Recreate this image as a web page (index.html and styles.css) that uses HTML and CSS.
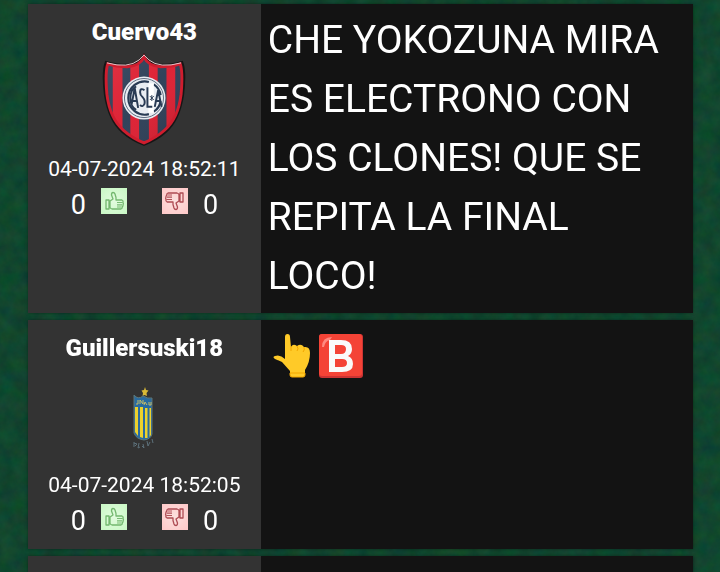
FILE: index.html
```html
<!DOCTYPE html>
<html lang="es">
<head>
<meta charset="utf-8">
<meta name="viewport" content="width=device-width, initial-scale=1">
<title>Chat</title>
<link rel="stylesheet" href="styles.css">
</head>
<body>
<svg class="felt" aria-hidden="true">
  <filter id="grain" x="0" y="0" width="100%" height="100%" color-interpolation-filters="sRGB">
    <feTurbulence type="fractalNoise" baseFrequency="0.07" numOctaves="4" seed="8"/>
    <feColorMatrix values="0.10 0 0 0 0.015  0 0.10 0 0 0.225  0 0 0.08 0 0.14  0 0 0 0 1"/>
  </filter>
  <rect width="100%" height="100%" filter="url(#grain)"/>
</svg>
<svg class="symbols" aria-hidden="true">
  <symbol id="thumb" viewBox="0 0 26 26">
    <path d="M5 12h3v9H5zM9 13l3-2-1.500-4q0-2.500 1.500-2.500 1.500 0 2 1.500l1 3.500V12h6q1.500.5 1 2.500.8 1.200 0 2.300.3 1.300-.7 2 .2 1.700-1.300 2.200H11q-1.500-.5-2-1.500z" fill="none" stroke="currentColor" stroke-width="1.300" stroke-linejoin="round" opacity=".85"/>
    <path d="M16 14.500h5.500M16 16.800h5M16 19h4.500" stroke="currentColor" stroke-width="1.200" opacity=".8"/>
  </symbol>
</svg>
<main class="feed">
  <article class="post">
    <header class="author">
      <h2 class="name">Cuervo43</h2>
      <div class="crest">
        <svg class="shield" viewBox="0 0 86 96" role="img" aria-label="Escudo CASLA">
          <defs>
            <clipPath id="body"><path d="M43 4Q39 13 26 14 14 14 6 11 3 19 5 42 8 67 22 79 31 87 43 92 55 87 64 79 78 67 81 42 83 19 80 11 72 14 60 14 47 13 43 4z"/></clipPath>
            <linearGradient id="shade" x2="1" y2="1"><stop offset="0" stop-color="#fff" stop-opacity=".1"/><stop offset=".5" stop-color="#fff" stop-opacity=".04"/><stop offset="1" stop-opacity=".15"/></linearGradient>
          </defs>
          <path d="M43 2Q39 11 26 12 14 12 4 9 0 19 3 43 7 69 21 81 30 89 43 94 56 89 65 81 79 69 83 43 86 19 82 9 72 12 60 12 47 11 43 2z" fill="#111" stroke="#161616" stroke-width="2"/>
          <g clip-path="url(#body)">
            <path d="M0 0h86v96H0z" fill="#293b54"/>
            <path d="M11 0h10v96H11zM29 0h9v96h-9zM48 0h9v96h-9zM66 0h9v96h-9z" fill="#dc1b2e"/>
          </g>
          <path d="M43 4Q39 13 26 14 14 14 6 11 3 19 5 42 8 67 22 79 31 87 43 92 55 87 64 79 78 67 81 42 83 19 80 11 72 14 60 14 47 13 43 4z" fill="url(#shade)" stroke="#cf1d2e" stroke-width="3"/>
          <path d="M5 10q22 6 33-3l5-5 5 5q11 9 33 3" fill="none" stroke="#e9c9ce" stroke-width="1"/>
          <circle cx="43" cy="46" r="22" fill="#e9edf2"/>
          <circle cx="43" cy="46" r="20" fill="none" stroke="#5c6a80" stroke-width="1"/>
          <path d="M48 29.500a17 17 0 1 0 0 33M53 32q6 4 7 11M60 49q-1 7-7 11" fill="none" stroke="#293b54" stroke-width="2.200"/>
          <path d="M47.500 31h5.500v30h-5.500z" fill="#fff"/>
          <g fill="none" stroke="#293b54" stroke-width="2">
            <path d="M35 34q-6 3-6 12t6 12M30 54l3.500-18L37 56M31 49h5M43.500 38q-4.500-3-4.500 2 0 3 2.500 5 3 3 2 7-2 4-4.500 1M46.500 35v20h5M54 55l3.500-17L61 55M55 49h5"/>
            <path d="M49 44l4 4M53 44l-4 4M51 43v6" stroke-width="1"/>
          </g>
        </svg>
      </div>
      <time class="date" datetime="2024-07-04T18:52:11">04-07-2024 18:52:11</time>
      <div class="votes">
        <span>0</span>
        <button class="vote up" type="button" aria-label="Me gusta"><svg><use href="#thumb"/></svg></button>
        <button class="vote down" type="button" aria-label="No me gusta"><svg><use href="#thumb"/></svg></button>
        <span>0</span>
      </div>
    </header>
    <p class="message">CHE YOKOZUNA MIRA ES ELECTRONO CON LOS CLONES! QUE SE REPITA LA FINAL LOCO!</p>
  </article>

  <article class="post">
    <header class="author">
      <h2 class="name">Guillersuski18</h2>
      <div class="crest">
        <svg class="pennant" viewBox="0 -6 24 70" role="img" aria-label="Escudo azul y amarillo">
          <path d="M13 0l1 3 2.500.5-2 2.500.5 3-2.500-1-2 1 .5-3-1.500-2.500 2.500-.5z" fill="#d9b936"/>
          <path d="M2 8q4 5 9 1 5 3 9 2v36q-1 5-8 6-8-1-10-7z" fill="#296ba0" stroke="#5d7778"/>
          <path d="M3 20h3v29l-3-4zM8 20h3v31l-3-1zM13 21h2.500v30H13zM17.500 21H19v27l-1.500 2z" fill="#ecd12d"/>
          <path d="M6 13v4H4M8 17v-4l3 4v-4M12 18l1-3 2 3M17 15v3h2v-3" fill="none" stroke="#c5bc69"/>
          <path d="M2 55v5M2 56l3 1-2 2M7 56l-1 5 2-1M11 57l1 4-2-2M15 54l1 5 2-4M20 52l1 4" fill="none" stroke="#5c707a"/>
        </svg>
      </div>
      <time class="date" datetime="2024-07-04T18:52:05">04-07-2024 18:52:05</time>
      <div class="votes">
        <span>0</span>
        <button class="vote up" type="button" aria-label="Me gusta"><svg><use href="#thumb"/></svg></button>
        <button class="vote down" type="button" aria-label="No me gusta"><svg><use href="#thumb"/></svg></button>
        <span>0</span>
      </div>
    </header>
    <p class="message emojis">
      <svg class="emoji" viewBox="0 0 44 44" role="img" aria-label="Dedo hacia arriba">
        <path d="M13 3q0-3 2.500-3T18 3l1 10q2-4 6-1 4-3 7 1 6-1 6 6 0 9-5 17v5q0 2-2 2H20q-2 0-2-2v-4L10 28 3 25q-3-2 0-3 5-2 10 3z" fill="#ffca28"/>
        <path d="M19 12v5M25 12q2 3 0 5M32 13q1 3-1 5M18 39h15v2q0 2-2 2H20q-2 0-2-2z" fill="none" stroke="#f2a600" stroke-width="1"/>
      </svg>
      <svg class="emoji" viewBox="0 0 44 44" role="img" aria-label="B">
        <rect width="44" height="44" rx="3" fill="#c33"/>
        <rect width="43" height="42" rx="3" fill="#f44336"/>
        <path d="M3 13q0-10 10-10l-2 3q-5 1-6 7z" fill="#ff8a80"/>
        <path d="M10 6h12q11 0 11 9 0 5-4 7 5 2 5 8 0 8-11 8H10zM16 11v9h6q5 0 5-5 0-4-5-4zM16 25v8h7q5 0 5-4 0-4-5-4z" fill="#fafafa" fill-rule="evenodd"/>
      </svg>
    </p>
  </article>

  <article class="post">
    <header class="author"></header>
    <p class="message"></p>
  </article>
</main>
</body>
</html>
```
FILE: styles.css
```css
* { box-sizing: border-box; }

body {
  margin: 0;
  height: 100vh;
  overflow: hidden;
  background: #10482f;
  color: #fff;
  font-family: Roboto, "Liberation Sans", sans-serif;
}

.felt {
  position: fixed;
  inset: 0;
  z-index: -1;
  width: 100%;
  height: 100%;
}

.symbols {
  position: absolute;
  width: 0;
  height: 0;
}

.feed {
  display: flex;
  flex-direction: column;
  gap: 7px;
  padding: 4px 27px 0 28px;
}

.post {
  display: grid;
  grid-template-columns: 35% 1fr;
  min-height: 229px;
  background: #131313;
  box-shadow: 0 0 3px rgb(0 0 0 / 40%);
}

.author {
  display: flex;
  flex-direction: column;
  align-items: center;
  padding-top: 14px;
  background: #333;
}

.name {
  margin: 0;
  font-size: 24px;
  font-weight: 900;
  line-height: 28px;
}

.crest {
  display: flex;
  align-items: center;
  justify-content: center;
  height: 108px;
}

.shield {
  width: 84px;
  height: 94px;
}

.pennant {
  width: 24px;
  height: 70px;
}

.date {
  font-size: 21px;
  line-height: 30px;
}

.votes {
  display: flex;
  align-items: flex-start;
  gap: 15px;
  margin-top: 4px;
  font-size: 27px;
  line-height: 34px;
}

.vote {
  width: 26px;
  height: 26px;
  padding: 0;
  border: 0;
}

.vote svg {
  display: block;
  width: 26px;
  height: 26px;
}

.up {
  margin-right: 20px;
  background: radial-gradient(#e2fbde, #c8f8c4);
  color: #62ac5d;
}

.down {
  background: radial-gradient(#fbe0de, #ffc8c8);
  color: #a0323c;
}

.down svg { transform: rotate(180deg); }

.message {
  margin: 0;
  padding: 7px;
  font-size: 39px;
  line-height: 59px;
}

.emojis {
  display: flex;
  align-items: flex-start;
  gap: 3px;
  padding: 14px 11px;
}

.emoji {
  width: 44px;
  height: 44px;
}
```
